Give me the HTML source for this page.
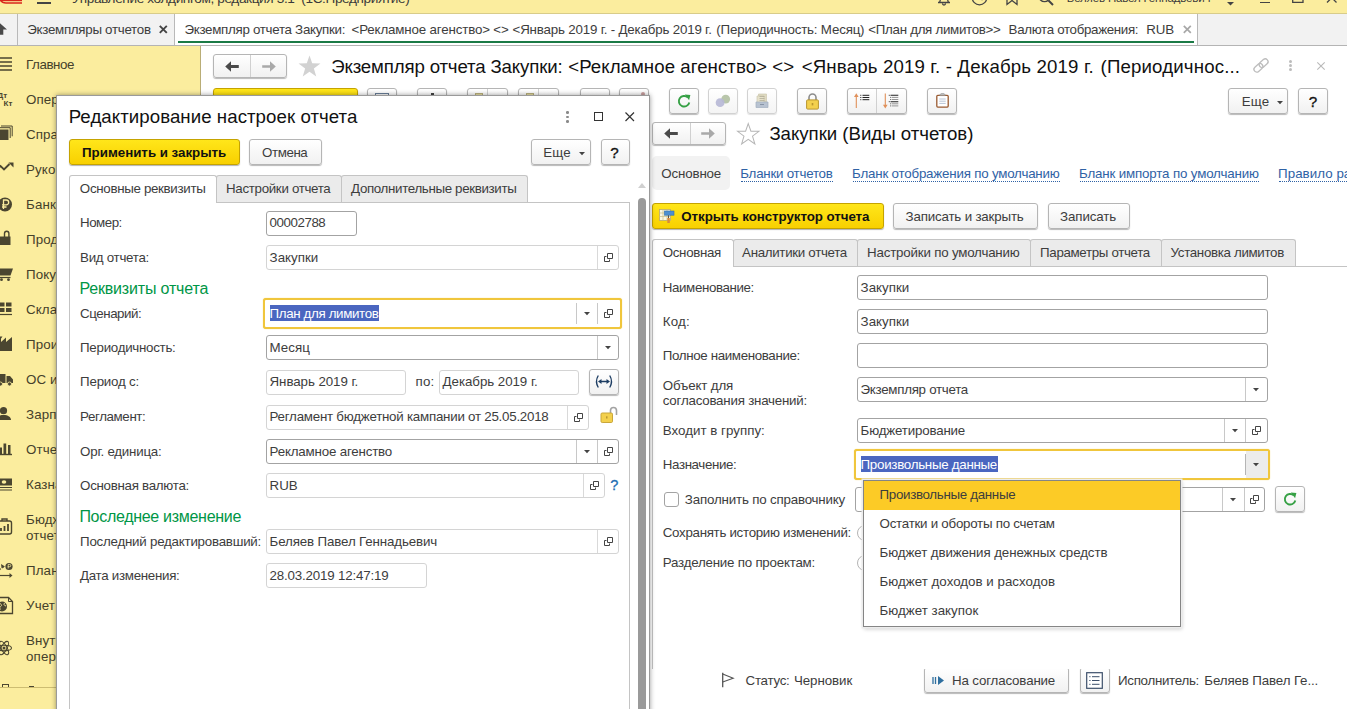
<!DOCTYPE html>
<html lang="ru"><head><meta charset="utf-8"><title>1С:Предприятие</title>
<style>
*{box-sizing:border-box;margin:0;padding:0}
html,body{width:1347px;height:709px;overflow:hidden;background:#fff}
body{font-family:"Liberation Sans",sans-serif;font-size:13.33px;color:#3d3d3d;position:relative}
.a{position:absolute}
.t{position:absolute;white-space:pre}
svg{position:absolute;overflow:visible}
.btn{border:1px solid #b5b5b5;border-radius:3px;background:linear-gradient(#ffffff,#f1f1f1);box-shadow:0 1px 1px rgba(0,0,0,.28)}
.btnd{border:1px solid #d2d2d2;border-radius:3px;background:linear-gradient(#ffffff,#f4f4f4);box-shadow:0 1px 1px rgba(0,0,0,.12)}
.ybtn{border:1px solid #c5a300;border-radius:3px;background:linear-gradient(#ffe61a,#f8d000);box-shadow:0 1px 1px rgba(0,0,0,.3)}
.inp{border:1px solid #a3a3a3;border-radius:3px;background:#fff}
.ro{border-color:#d4d4d4}
.foc{border:2px solid #f0c63c;border-radius:3px;background:#fff;box-shadow:0 0 1px #f0c63c}
.sep{width:1px;background:#c8c8c8}
.tab{border:1px solid #c4c4c4;border-bottom:none;border-radius:3px 3px 0 0;background:#ebebeb}
.tabon{background:#fff}

</style></head><body>
<div class="a " style="left:0px;top:0px;width:1347px;height:14px;background:#fbed9e;border-bottom:1px solid #d8cc8a;overflow:hidden"></div>
<div class="a" style="left:0;top:0;width:1347px;height:13px;overflow:hidden">
<svg style="left:0px;top:0px;" width="24" height="6" viewBox="0 0 24 6"><path d="M0 0.400h22" stroke="#d9261c" stroke-width="1.6" fill="none"/><path d="M0 -1c1 3 3 4 6 4h16" stroke="#d9261c" stroke-width="1.5" fill="none"/></svg>
<div class="a " style="left:37px;top:2.3px;width:14px;height:1.3px;background:#444"></div>
<span class="t" style="left:72.05px;top:-9.24px;line-height:16px;font-size:13.6px;color:#3a3a3a;letter-spacing:-0.369px;">Управление холдингом, редакция 3.1  (1С:Предприятие)</span>
<span class="t" style="left:1066.79px;top:-9.47px;line-height:14px;font-size:11.5px;color:#3a3a3a;letter-spacing:-0.156px;">Беляев Павел Геннадьевич</span>
<svg style="left:936px;top:-10px;" width="16" height="16" viewBox="0 0 16 16"><path d="M2 12.5h12M3.5 12c1-1 1-3 1-5a3.5 3.5 0 0 1 7 0c0 2 0 4 1 5M6.5 13.5a1.5 1.5 0 0 0 3 0" stroke="#444" stroke-width="1.3" fill="none"/></svg>
<svg style="left:971px;top:-10px;" width="17" height="17" viewBox="0 0 17 17"><circle cx="8.5" cy="7.5" r="7.3" stroke="#444" stroke-width="1.3" fill="none"/><path d="M8.5 3v5l3 2" stroke="#444" stroke-width="1.3" fill="none"/></svg>
<svg style="left:1005px;top:-10px;" width="14" height="16" viewBox="0 0 14 16"><path d="M2 0v14.5l5-4 5 4V0" stroke="#444" stroke-width="1.3" fill="none"/></svg>
<svg style="left:1038px;top:-10px;" width="16" height="16" viewBox="0 0 16 16"><circle cx="6.5" cy="6" r="5.6" stroke="#444" stroke-width="1.4" fill="none"/><path d="M10.5 10.5l4.5 4.5" stroke="#444" stroke-width="2"/></svg>
<svg style="left:1227px;top:2.3px;" width="7" height="4" viewBox="0 0 7 4"><path d="M0 0h7l-3.5 3.5z" fill="#444"/></svg>
<div class="a " style="left:1260px;top:1.5px;width:10px;height:1.4px;background:#444"></div>
<svg style="left:1292px;top:-8px;" width="12" height="12" viewBox="0 0 12 12"><path d="M0.7 0v10.3h10.3v-10.3" stroke="#444" stroke-width="1.3" fill="none"/></svg>
<svg style="left:1327px;top:-7px;" width="10" height="10" viewBox="0 0 10 10"><path d="M0 0l9.5 9.5M9.5 0l-9.500 9.500" stroke="#444" stroke-width="1.3"/></svg>
</div>
<div class="a " style="left:0px;top:14px;width:1347px;height:32px;background:#f2f2f2;border-bottom:1px solid #b4b4b4"></div>
<div class="a " style="left:17px;top:14px;width:1px;height:31px;background:#b9b9b9"></div>
<div class="a " style="left:174px;top:14px;width:1px;height:31px;background:#b9b9b9"></div>
<div class="a " style="left:175px;top:14px;width:1022px;height:31px;background:#fff"></div>
<div class="a " style="left:1197px;top:14px;width:1px;height:31px;background:#b9b9b9"></div>
<div class="a " style="left:178px;top:41px;width:1016px;height:2px;background:#1b7a46"></div>
<svg style="left:-9px;top:22px;" width="17" height="13" viewBox="0 0 17 13"><path d="M8 0.300l8 7.200h-3.700v5.200h-8.600v-5.200h-3.700z" fill="#4a4a4a"/></svg>
<span class="t" style="left:27.27px;top:21.75px;line-height:16px;letter-spacing:-0.288px;">Экземпляры отчетов</span>
<svg style="left:158.5px;top:25px;" width="9" height="9" viewBox="0 0 9 9"><path d="M0.8 0.8l7 7M7.800 0.800l-7 7" stroke="#444" stroke-width="1.9"/></svg>
<span class="t" style="left:184.47px;top:21.75px;line-height:16px;letter-spacing:-0.293px;">Экземпляр отчета Закупки:</span>
<span class="t" style="left:351.57px;top:21.75px;line-height:16px;letter-spacing:-0.156px;">&lt;Рекламное агенство&gt; &lt;&gt;</span>
<span class="t" style="left:512.57px;top:21.75px;line-height:16px;letter-spacing:-0.186px;">&lt;Январь 2019 г. - Декабрь 2019 г.</span>
<span class="t" style="left:716.37px;top:21.75px;line-height:16px;letter-spacing:-0.185px;">(Периодичность: Месяц)</span>
<span class="t" style="left:868.37px;top:21.75px;line-height:16px;letter-spacing:-0.302px;">&lt;План для лимитов&gt;&gt;</span>
<span class="t" style="left:1008.57px;top:21.75px;line-height:16px;letter-spacing:-0.325px;">Валюта отображения:</span>
<span class="t" style="left:1146.37px;top:21.75px;line-height:16px;letter-spacing:-0.220px;">RUB</span>
<svg style="left:1182.5px;top:25px;" width="9" height="9" viewBox="0 0 9 9"><path d="M0.8 0.8l7 7M7.800 0.800l-7 7" stroke="#a8a8a8" stroke-width="1.7"/></svg>
<div class="a " style="left:0px;top:46px;width:200px;height:663px;background:#fbed9e"></div>
<div class="a " style="left:200px;top:46px;width:1px;height:663px;background:#b9ad76"></div>
<span class="t" style="left:26.07px;top:56.85px;line-height:16px;color:#45412b;letter-spacing:-0.420px;">Главное</span>
<span class="t" style="left:26.07px;top:91.85px;line-height:16px;color:#45412b;letter-spacing:0.100px;">Операции</span>
<span class="t" style="left:26.07px;top:126.85px;line-height:16px;color:#45412b;letter-spacing:0.100px;">Справочники</span>
<span class="t" style="left:26.07px;top:161.85px;line-height:16px;color:#45412b;letter-spacing:0.100px;">Руководителю</span>
<span class="t" style="left:26.07px;top:196.85px;line-height:16px;color:#45412b;letter-spacing:0.100px;">Банк и касса</span>
<span class="t" style="left:26.07px;top:231.85px;line-height:16px;color:#45412b;letter-spacing:0.100px;">Продажи</span>
<span class="t" style="left:26.07px;top:266.85px;line-height:16px;color:#45412b;letter-spacing:0.100px;">Покупки</span>
<span class="t" style="left:26.07px;top:301.85px;line-height:16px;color:#45412b;letter-spacing:0.100px;">Склад</span>
<span class="t" style="left:26.07px;top:336.85px;line-height:16px;color:#45412b;letter-spacing:0.100px;">Производство</span>
<span class="t" style="left:26.07px;top:371.85px;line-height:16px;color:#45412b;letter-spacing:0.100px;">ОС и НМА</span>
<span class="t" style="left:26.07px;top:406.85px;line-height:16px;color:#45412b;letter-spacing:0.100px;">Зарплата и кадры</span>
<span class="t" style="left:26.07px;top:441.85px;line-height:16px;color:#45412b;letter-spacing:0.100px;">Отчеты</span>
<span class="t" style="left:26.07px;top:476.85px;line-height:16px;color:#45412b;letter-spacing:0.100px;">Казначейство</span>
<span class="t" style="left:26.07px;top:511.65px;line-height:16px;color:#45412b;letter-spacing:0.100px;">Бюджетирование,</span>
<span class="t" style="left:26.07px;top:527.65px;line-height:16px;color:#45412b;letter-spacing:0.100px;">отчетность</span>
<span class="t" style="left:26.07px;top:562.85px;line-height:16px;color:#45412b;letter-spacing:0.100px;">Планирование</span>
<span class="t" style="left:26.07px;top:597.85px;line-height:16px;color:#45412b;letter-spacing:0.100px;">Учет</span>
<span class="t" style="left:26.07px;top:632.65px;line-height:16px;color:#45412b;letter-spacing:0.100px;">Внутригрупповые</span>
<span class="t" style="left:26.07px;top:648.65px;line-height:16px;color:#45412b;letter-spacing:0.100px;">операции</span>
<div class="a " style="left:2px;top:684px;width:6.5px;height:4px;border:1.300px solid #4b4630;border-bottom:none"></div>
<div class="a " style="left:29px;top:686px;width:5px;height:1.3px;background:#4b4630"></div>
<div class="a " style="left:0px;top:687px;width:57px;height:1px;background:#cdbd72"></div>
<div class="a " style="left:0px;top:688px;width:57px;height:21px;background:#fbed9e"></div>
<div class="a btn" style="left:213px;top:54px;width:74px;height:24px;"></div>
<div class="a " style="left:250px;top:55px;width:1px;height:22px;background:#d0d0d0"></div>
<svg style="left:224.5px;top:61.0px;" width="14" height="11" viewBox="0 0 14 11"><path d="M0.200 5.500l5.800 -5.300v3.800h7.800v3h-7.800v3.800z" fill="#4a4a4a"/></svg>
<svg style="left:261.5px;top:61.0px;" width="14" height="11" viewBox="0 0 14 11"><path d="M13.800 5.500l-5.800 -5.300v4h-7.800v2.600h7.800v4z" fill="#a9a9a9"/></svg>
<svg style="left:298px;top:54.5px;" width="23" height="23" viewBox="0 0 1 1"><polygon points="0.500,0.025 0.618,0.363 0.976,0.370 0.690,0.587 0.794,0.930 0.500,0.725 0.206,0.930 0.310,0.587 0.024,0.370 0.382,0.363" fill="#d2d2d2"/></svg>
<span class="t" style="left:331.19px;top:55.71px;line-height:22px;font-size:18.67px;color:#111;letter-spacing:-0.150px;">Экземпляр отчета Закупки:</span>
<span class="t" style="left:568.19px;top:55.71px;line-height:22px;font-size:18.67px;color:#111;letter-spacing:0.046px;">&lt;Рекламное агенство&gt; &lt;&gt;</span>
<span class="t" style="left:801.67px;top:55.71px;line-height:22px;font-size:18.67px;color:#111;letter-spacing:0.150px;">&lt;Январь 2019 г. - Декабрь 2019 г.</span>
<span class="t" style="left:1100.56px;top:55.71px;line-height:22px;font-size:18.67px;color:#111;letter-spacing:0.150px;">(Периодичнос...</span>
<svg style="left:1252px;top:57px;" width="18" height="17" viewBox="0 0 18 17"><g transform="rotate(-42 9 8.500)" stroke="#bdbdbd" stroke-width="1.300" fill="none"><rect x="0.500" y="5.700" width="10" height="5.600" rx="2.800"/><rect x="7.500" y="5.700" width="10" height="5.600" rx="2.800" /></g></svg>
<div class="a " style="left:1289px;top:59.8px;width:3px;height:3px;background:#bcbcbc;border-radius:50%"></div>
<div class="a " style="left:1289px;top:63.9px;width:3px;height:3px;background:#bcbcbc;border-radius:50%"></div>
<div class="a " style="left:1289px;top:68.0px;width:3px;height:3px;background:#bcbcbc;border-radius:50%"></div>
<svg style="left:1316.5px;top:61.5px;" width="8" height="8" viewBox="0 0 8 8"><path d="M0.300 0.300l7.400 7.400M7.700 0.300l-7.400 7.400" stroke="#b9b9b9" stroke-width="1.100"/></svg>
<div class="a ybtn" style="left:213px;top:88px;width:145px;height:26px;"></div>
<div class="a btn" style="left:367px;top:88px;width:30px;height:26px;"></div>
<div class="a btn" style="left:417px;top:88px;width:30px;height:26px;"></div>
<div class="a btn" style="left:467px;top:88px;width:41px;height:26px;"></div>
<div class="a btn" style="left:518px;top:88px;width:41px;height:26px;"></div>
<div class="a btn" style="left:580px;top:88px;width:30px;height:26px;"></div>
<div class="a btn" style="left:619px;top:88px;width:30px;height:26px;"></div>
<div class="a " style="left:487px;top:89px;width:1px;height:24px;background:#d0d0d0"></div>
<div class="a " style="left:538px;top:89px;width:1px;height:24px;background:#d0d0d0"></div>
<div class="a " style="left:375px;top:93px;width:14px;height:10px;border:1.5px solid #6a7f99"></div>
<div class="a " style="left:431px;top:93px;width:3px;height:4px;background:#444"></div>
<div class="a " style="left:475px;top:93px;width:8px;height:6px;background:#e8e0a0;border:1px solid #b9b080"></div>
<div class="a " style="left:526px;top:93px;width:8px;height:6px;background:#e8e0a0;border:1px solid #b9b080"></div>
<div class="a " style="left:641px;top:92px;width:4px;height:4px;background:#c9a0a0;border-radius:50%"></div>
<div class="a btn" style="left:669px;top:88px;width:30px;height:26px;"></div>
<div class="a btnd" style="left:708px;top:88px;width:30px;height:26px;"></div>
<div class="a btnd" style="left:747px;top:88px;width:30px;height:26px;"></div>
<div class="a btn" style="left:797px;top:88px;width:30px;height:26px;"></div>
<div class="a btn" style="left:847px;top:88px;width:60px;height:26px;"></div>
<div class="a btn" style="left:927px;top:88px;width:30px;height:26px;"></div>
<div class="a " style="left:876px;top:89px;width:1px;height:24px;background:#d0d0d0"></div>
<div class="a btn" style="left:1228px;top:88px;width:60px;height:26px;"></div>
<div class="a btn" style="left:1298px;top:88px;width:30px;height:26px;"></div>
<span class="t" style="left:1241.71px;top:93.85px;line-height:16px;letter-spacing:0.150px;">Еще</span>
<svg style="left:1276.5px;top:100.5px;" width="6" height="4" viewBox="0 0 6 4"><path d="M0 0h6l-3 3.300z" fill="#444"/></svg>
<span class="t" style="left:1308.64px;top:92.87px;line-height:18px;font-size:15.2px;color:#111;letter-spacing:0.000px;-webkit-text-stroke:0.35px #111;">?</span>
<div class="a btn" style="left:652px;top:121.5px;width:74px;height:23.5px;"></div>
<div class="a " style="left:689.5px;top:122.5px;width:1px;height:21.5px;background:#d0d0d0"></div>
<svg style="left:663.75px;top:128.25px;" width="14" height="11" viewBox="0 0 14 11"><path d="M0.200 5.500l5.800 -5.300v3.800h7.800v3h-7.800v3.800z" fill="#4a4a4a"/></svg>
<svg style="left:700.75px;top:128.25px;" width="14" height="11" viewBox="0 0 14 11"><path d="M13.800 5.500l-5.800 -5.300v4h-7.800v2.600h7.800v4z" fill="#a9a9a9"/></svg>
<svg style="left:737px;top:122.5px;" width="22.5" height="22.5" viewBox="0 0 1 1"><polygon points="0.500,0.025 0.618,0.363 0.976,0.370 0.690,0.587 0.794,0.930 0.500,0.725 0.206,0.930 0.310,0.587 0.024,0.370 0.382,0.363" fill="#fff" stroke="#b5b5b5" stroke-width="0.045"/></svg>
<span class="t" style="left:769.39px;top:122.81px;line-height:22px;font-size:18.67px;color:#111;letter-spacing:-0.029px;">Закупки (Виды отчетов)</span>
<div class="a " style="left:652px;top:156px;width:78px;height:34px;background:#f2f2f2;border-radius:5px"></div>
<span class="t" style="left:661.37px;top:165.65px;line-height:16px;letter-spacing:-0.167px;">Основное</span>
<span class="t" style="left:740.27px;top:165.75px;line-height:16px;color:#2f62a5;letter-spacing:-0.239px;">Бланки отчетов</span>
<div class="a " style="left:741.2px;top:180.5px;width:91.39999999999998px;height:1px;border-bottom:1px dotted #2f62a5"></div>
<span class="t" style="left:852.07px;top:165.75px;line-height:16px;color:#2f62a5;letter-spacing:-0.198px;">Бланк отображения по умолчанию</span>
<div class="a " style="left:853px;top:180.5px;width:206.5px;height:1px;border-bottom:1px dotted #2f62a5"></div>
<span class="t" style="left:1078.97px;top:165.75px;line-height:16px;color:#2f62a5;letter-spacing:-0.155px;">Бланк импорта по умолчанию</span>
<div class="a " style="left:1079.9px;top:180.5px;width:178.79999999999995px;height:1px;border-bottom:1px dotted #2f62a5"></div>
<span class="t" style="left:1278.07px;top:165.75px;line-height:16px;color:#2f62a5;letter-spacing:0.043px;">Правило расчета</span>
<div class="a " style="left:1279px;top:180.5px;width:106px;height:1px;border-bottom:1px dotted #2f62a5"></div>
<div class="a ybtn" style="left:652px;top:203px;width:232px;height:26px;"></div>
<span class="t" style="left:681.27px;top:209.05px;line-height:16px;font-weight:bold;color:#111;letter-spacing:-0.063px;">Открыть конструктор отчета</span>
<div class="a btn" style="left:893px;top:203px;width:145px;height:26px;"></div>
<span class="t" style="left:905.57px;top:209.05px;line-height:16px;letter-spacing:-0.177px;">Записать и закрыть</span>
<div class="a btn" style="left:1048px;top:203px;width:82px;height:26px;"></div>
<span class="t" style="left:1060.07px;top:209.05px;line-height:16px;letter-spacing:-0.108px;">Записать</span>
<div class="a " style="left:652px;top:266px;width:695px;height:1px;background:#c4c4c4"></div>
<div class="a " style="left:652px;top:266px;width:1px;height:403px;background:#c4c4c4"></div>
<div class="a tab tabon" style="left:652px;top:239px;width:81.5px;height:28px;"></div>
<div class="a tab" style="left:732.5px;top:239px;width:125.5px;height:27px;"></div>
<div class="a tab" style="left:857px;top:239px;width:174px;height:27px;"></div>
<div class="a tab" style="left:1030px;top:239px;width:131.5px;height:27px;"></div>
<div class="a tab" style="left:1160.5px;top:239px;width:135.5px;height:27px;"></div>
<span class="t" style="left:662.77px;top:244.95px;line-height:16px;letter-spacing:-0.339px;">Основная</span>
<span class="t" style="left:742.07px;top:244.95px;line-height:16px;letter-spacing:-0.315px;">Аналитики отчета</span>
<span class="t" style="left:867.07px;top:244.95px;line-height:16px;letter-spacing:-0.197px;">Настройки по умолчанию</span>
<span class="t" style="left:1040.07px;top:244.95px;line-height:16px;letter-spacing:-0.337px;">Параметры отчета</span>
<span class="t" style="left:1170.57px;top:244.95px;line-height:16px;letter-spacing:-0.330px;">Установка лимитов</span>
<span class="t" style="left:662.77px;top:280.15px;line-height:16px;letter-spacing:-0.383px;">Наименование:</span>
<div class="a inp" style="left:857px;top:275px;width:411px;height:25px;"></div>
<span class="t" style="left:860.57px;top:279.75px;line-height:16px;letter-spacing:0.016px;">Закупки</span>
<span class="t" style="left:662.86px;top:314.15px;line-height:16px;letter-spacing:0.150px;">Код:</span>
<div class="a inp" style="left:857px;top:309px;width:411px;height:25px;"></div>
<span class="t" style="left:860.57px;top:313.75px;line-height:16px;letter-spacing:0.016px;">Закупки</span>
<span class="t" style="left:662.77px;top:348.15px;line-height:16px;letter-spacing:-0.352px;">Полное наименование:</span>
<div class="a inp" style="left:857px;top:343px;width:411px;height:25px;"></div>
<span class="t" style="left:662.77px;top:377.65px;line-height:16px;letter-spacing:-0.151px;">Объект для</span>
<span class="t" style="left:662.77px;top:393.35px;line-height:16px;letter-spacing:-0.223px;">согласования значений:</span>
<div class="a inp" style="left:857px;top:377px;width:411px;height:25px;"></div>
<span class="t" style="left:860.57px;top:381.75px;line-height:16px;letter-spacing:-0.282px;">Экземпляр отчета</span>
<div class="a sep" style="left:1245px;top:378px;width:1px;height:23px;"></div>
<svg style="left:1252.5px;top:388.0px;" width="6" height="4" viewBox="0 0 6 4"><path d="M0 0h6l-3 3.300z" fill="#444"/></svg>
<span class="t" style="left:662.77px;top:422.85px;line-height:16px;letter-spacing:0.015px;">Входит в группу:</span>
<div class="a inp" style="left:857px;top:418px;width:411px;height:25px;"></div>
<span class="t" style="left:860.57px;top:422.85px;line-height:16px;letter-spacing:-0.181px;">Бюджетирование</span>
<div class="a sep" style="left:1224px;top:419px;width:1px;height:23px;"></div>
<div class="a sep" style="left:1245px;top:419px;width:1px;height:23px;"></div>
<svg style="left:1231.5px;top:429.0px;" width="6" height="4" viewBox="0 0 6 4"><path d="M0 0h6l-3 3.300z" fill="#444"/></svg>
<svg style="left:1252px;top:426px;" width="9" height="9" viewBox="0 0 9 9"><path d="M3.500 0.500h5v5h-5z" fill="#fff" stroke="#444" stroke-width="1"/><path d="M2.500 3.500h-2v5h5v-2" fill="none" stroke="#444" stroke-width="1"/></svg>
<span class="t" style="left:662.77px;top:456.65px;line-height:16px;letter-spacing:-0.376px;">Назначение:</span>
<div class="a foc" style="left:854px;top:449px;width:416px;height:31px;"></div>
<div class="a " style="left:861.3px;top:456px;width:136.5px;height:16px;background:#4a66c0"></div>
<span class="t" style="left:860.57px;top:456.65px;line-height:16px;color:#fff;letter-spacing:-0.277px;">Произвольные данные</span>
<div class="a " style="left:1246px;top:451px;width:21.5px;height:27px;background:#ececec"></div>
<div class="a sep" style="left:1245px;top:454px;width:1px;height:21px;background:#b5b5b5"></div>
<svg style="left:1252.5px;top:463.0px;" width="6" height="4" viewBox="0 0 6 4"><path d="M0 0h6l-3 3.300z" fill="#444"/></svg>
<div class="a " style="left:664px;top:492px;width:15px;height:15px;border:1px solid #a3a3a3;border-radius:3px;background:#fff"></div>
<span class="t" style="left:684.87px;top:491.65px;line-height:16px;letter-spacing:-0.183px;">Заполнить по справочнику</span>
<div class="a inp" style="left:855px;top:487px;width:410px;height:25px;"></div>
<div class="a sep" style="left:1222px;top:488px;width:1px;height:23px;"></div>
<div class="a sep" style="left:1243.5px;top:488px;width:1px;height:23px;"></div>
<svg style="left:1229.5px;top:497.7px;" width="6" height="4" viewBox="0 0 6 4"><path d="M0 0h6l-3 3.300z" fill="#444"/></svg>
<svg style="left:1250px;top:495px;" width="9" height="9" viewBox="0 0 9 9"><path d="M3.500 0.500h5v5h-5z" fill="#fff" stroke="#444" stroke-width="1"/><path d="M2.500 3.500h-2v5h5v-2" fill="none" stroke="#444" stroke-width="1"/></svg>
<div class="a btn" style="left:1275px;top:486px;width:30px;height:26px;"></div>
<span class="t" style="left:662.77px;top:525.15px;line-height:16px;letter-spacing:-0.300px;">Сохранять историю изменений:</span>
<span class="t" style="left:662.77px;top:555.35px;line-height:16px;letter-spacing:-0.222px;">Разделение по проектам:</span>
<div class="a " style="left:857px;top:525px;width:16px;height:16px;border:1px solid #b5b5b5;border-radius:50%"></div>
<div class="a " style="left:857px;top:555px;width:16px;height:16px;border:1px solid #b5b5b5;border-radius:50%"></div>
<div class="a " style="left:863px;top:480px;width:318px;height:147px;background:#fff;border:1px solid #858585;box-shadow:0 0 0 1.500px #ececec,1px 2px 4px rgba(0,0,0,.22)"></div>
<div class="a " style="left:864px;top:481px;width:316px;height:29px;background:#fccb26"></div>
<span class="t" style="left:879.57px;top:487.45px;line-height:16px;letter-spacing:-0.316px;">Произвольные данные</span>
<span class="t" style="left:879.57px;top:516.45px;line-height:16px;letter-spacing:-0.254px;">Остатки и обороты по счетам</span>
<span class="t" style="left:879.57px;top:545.45px;line-height:16px;letter-spacing:-0.104px;">Бюджет движения денежных средств</span>
<span class="t" style="left:879.57px;top:574.45px;line-height:16px;letter-spacing:0.012px;">Бюджет доходов и расходов</span>
<span class="t" style="left:879.57px;top:603.45px;line-height:16px;letter-spacing:0.012px;">Бюджет закупок</span>
<span class="t" style="left:745.57px;top:672.65px;line-height:16px;letter-spacing:-0.273px;">Статус:</span>
<span class="t" style="left:793.97px;top:672.65px;line-height:16px;letter-spacing:-0.077px;">Черновик</span>
<div class="a" style="left:900px;top:669px;width:447px;height:40px;overflow:hidden">
<div class="a btn" style="left:23.5px;top:-2.5px;width:145px;height:26px;"></div>
<div class="a btn" style="left:179.5px;top:-2.5px;width:30px;height:26px;"></div>
</div>
<span class="t" style="left:952.07px;top:672.65px;line-height:16px;letter-spacing:-0.165px;">На согласование</span>
<span class="t" style="left:1118.07px;top:672.65px;line-height:16px;letter-spacing:-0.301px;">Исполнитель:</span>
<span class="t" style="left:1204.27px;top:672.65px;line-height:16px;letter-spacing:-0.125px;">Беляев Павел Ге...</span>
<div class="a " style="left:56px;top:95px;width:594px;height:620px;background:#fff;border:1px solid #9a9a9a;box-shadow:0 0 5px rgba(0,0,0,.4)"></div>
<span class="t" style="left:68.69px;top:105.91px;line-height:22px;font-size:18.67px;color:#111;letter-spacing:0.057px;">Редактирование настроек отчета</span>
<div class="a " style="left:566px;top:111.0px;width:2.6px;height:2.6px;background:#8a8a8a;border-radius:50%"></div>
<div class="a " style="left:566px;top:115.6px;width:2.6px;height:2.6px;background:#8a8a8a;border-radius:50%"></div>
<div class="a " style="left:566px;top:120.2px;width:2.6px;height:2.6px;background:#8a8a8a;border-radius:50%"></div>
<div class="a " style="left:594px;top:112px;width:9px;height:9px;border:1.3px solid #333"></div>
<svg style="left:625px;top:112px;" width="10" height="10" viewBox="0 0 10 10"><path d="M0.500 0.500l8.500 8.500M9 0.500l-8.500 8.500" stroke="#333" stroke-width="1.2"/></svg>
<div class="a ybtn" style="left:69px;top:139px;width:171px;height:26px;"></div>
<span class="t" style="left:82.07px;top:145.05px;line-height:16px;font-weight:bold;color:#111;letter-spacing:-0.018px;">Применить и закрыть</span>
<div class="a btn" style="left:249px;top:139px;width:73px;height:26px;"></div>
<span class="t" style="left:262.07px;top:145.05px;line-height:16px;letter-spacing:-0.424px;">Отмена</span>
<div class="a btn" style="left:530.5px;top:139px;width:60px;height:26px;"></div>
<span class="t" style="left:543.21px;top:145.05px;line-height:16px;letter-spacing:0.150px;">Еще</span>
<svg style="left:578.5px;top:151.5px;" width="6" height="4" viewBox="0 0 6 4"><path d="M0 0h6l-3 3.300z" fill="#444"/></svg>
<div class="a btn" style="left:600.5px;top:139px;width:29px;height:26px;"></div>
<span class="t" style="left:610.34px;top:144.07px;line-height:18px;font-size:15.2px;color:#111;letter-spacing:0.000px;-webkit-text-stroke:0.35px #111;">?</span>
<div class="a " style="left:69px;top:202px;width:561px;height:520px;border:1px solid #c4c4c4;background:#fff"></div>
<div class="a tab tabon" style="left:69px;top:175px;width:148px;height:28px;"></div>
<div class="a tab" style="left:216px;top:175px;width:125.5px;height:27px;"></div>
<div class="a tab" style="left:341px;top:175px;width:187px;height:27px;"></div>
<span class="t" style="left:79.87px;top:180.65px;line-height:16px;letter-spacing:-0.321px;">Основные реквизиты</span>
<span class="t" style="left:226.07px;top:180.65px;line-height:16px;letter-spacing:-0.324px;">Настройки отчета</span>
<span class="t" style="left:351.07px;top:180.65px;line-height:16px;letter-spacing:-0.345px;">Дополнительные реквизиты</span>
<svg style="left:637.5px;top:183px;" width="8" height="5" viewBox="0 0 8 5"><path d="M0 5l4 -5l4 5z" fill="#d0d0d0"/></svg>
<div class="a " style="left:638px;top:198px;width:7.5px;height:520px;background:#9a9a9a;border-radius:4px"></div>
<span class="t" style="left:80.07px;top:215.45px;line-height:16px;letter-spacing:-0.506px;">Номер:</span>
<div class="a inp" style="left:266px;top:211px;width:91px;height:25px;"></div>
<span class="t" style="left:269.57px;top:215.45px;line-height:16px;letter-spacing:-0.443px;">00002788</span>
<span class="t" style="left:80.07px;top:249.65px;line-height:16px;letter-spacing:-0.282px;">Вид отчета:</span>
<div class="a inp ro" style="left:266px;top:245px;width:353px;height:25px;"></div>
<span class="t" style="left:269.57px;top:249.65px;line-height:16px;letter-spacing:0.016px;">Закупки</span>
<div class="a sep" style="left:597px;top:246px;width:1px;height:23px;background:#d9d9d9"></div>
<svg style="left:604px;top:253px;" width="9" height="9" viewBox="0 0 9 9"><path d="M3.500 0.500h5v5h-5z" fill="#fff" stroke="#444" stroke-width="1"/><path d="M2.500 3.500h-2v5h5v-2" fill="none" stroke="#444" stroke-width="1"/></svg>
<span class="t" style="left:79.38px;top:279.08px;line-height:19px;font-size:16px;color:#009646;letter-spacing:-0.169px;">Реквизиты отчета</span>
<span class="t" style="left:80.07px;top:305.65px;line-height:16px;letter-spacing:-0.450px;">Сценарий:</span>
<div class="a foc" style="left:263px;top:298px;width:359px;height:31px;"></div>
<div class="a " style="left:270.3px;top:305.3px;width:108.5px;height:15.5px;background:#4a66c0"></div>
<span class="t" style="left:269.57px;top:305.65px;line-height:16px;color:#fff;letter-spacing:-0.359px;">План для лимитов</span>
<div class="a sep" style="left:576px;top:303px;width:1px;height:21px;"></div>
<div class="a sep" style="left:597px;top:303px;width:1px;height:21px;"></div>
<svg style="left:583.5px;top:312.0px;" width="6" height="4" viewBox="0 0 6 4"><path d="M0 0h6l-3 3.300z" fill="#444"/></svg>
<svg style="left:604px;top:309px;" width="9" height="9" viewBox="0 0 9 9"><path d="M3.500 0.500h5v5h-5z" fill="#fff" stroke="#444" stroke-width="1"/><path d="M2.500 3.500h-2v5h5v-2" fill="none" stroke="#444" stroke-width="1"/></svg>
<span class="t" style="left:80.07px;top:339.65px;line-height:16px;letter-spacing:-0.279px;">Периодичность:</span>
<div class="a inp" style="left:266px;top:335px;width:353px;height:25px;"></div>
<span class="t" style="left:269.57px;top:339.65px;line-height:16px;letter-spacing:0.005px;">Месяц</span>
<div class="a sep" style="left:597px;top:336px;width:1px;height:23px;"></div>
<svg style="left:605px;top:346.0px;" width="6" height="4" viewBox="0 0 6 4"><path d="M0 0h6l-3 3.300z" fill="#444"/></svg>
<span class="t" style="left:80.07px;top:374.45px;line-height:16px;letter-spacing:-0.202px;">Период с:</span>
<div class="a inp ro" style="left:266px;top:370px;width:140px;height:25px;"></div>
<span class="t" style="left:269.57px;top:374.45px;line-height:16px;letter-spacing:-0.075px;">Январь 2019 г.</span>
<span class="t" style="left:415.55px;top:374.45px;line-height:16px;letter-spacing:0.150px;">по:</span>
<div class="a inp ro" style="left:439px;top:370px;width:140px;height:25px;"></div>
<span class="t" style="left:442.57px;top:374.45px;line-height:16px;letter-spacing:-0.054px;">Декабрь 2019 г.</span>
<div class="a btn" style="left:589px;top:369px;width:30px;height:26px;"></div>
<span class="t" style="left:80.07px;top:409.45px;line-height:16px;letter-spacing:-0.391px;">Регламент:</span>
<div class="a inp ro" style="left:266px;top:405px;width:322.5px;height:25px;"></div>
<span class="t" style="left:269.57px;top:409.45px;line-height:16px;letter-spacing:-0.243px;">Регламент бюджетной кампании от 25.05.2018</span>
<div class="a sep" style="left:567px;top:406px;width:1px;height:23px;background:#d9d9d9"></div>
<svg style="left:574px;top:413px;" width="9" height="9" viewBox="0 0 9 9"><path d="M3.500 0.500h5v5h-5z" fill="#fff" stroke="#444" stroke-width="1"/><path d="M2.500 3.500h-2v5h5v-2" fill="none" stroke="#444" stroke-width="1"/></svg>
<span class="t" style="left:80.07px;top:443.75px;line-height:16px;letter-spacing:-0.218px;">Орг. единица:</span>
<div class="a inp" style="left:266px;top:439px;width:353px;height:25px;"></div>
<span class="t" style="left:269.57px;top:443.75px;line-height:16px;letter-spacing:-0.183px;">Рекламное агенство</span>
<div class="a sep" style="left:576px;top:440px;width:1px;height:23px;"></div>
<div class="a sep" style="left:597px;top:440px;width:1px;height:23px;"></div>
<svg style="left:583.5px;top:449.7px;" width="6" height="4" viewBox="0 0 6 4"><path d="M0 0h6l-3 3.300z" fill="#444"/></svg>
<svg style="left:604px;top:447px;" width="9" height="9" viewBox="0 0 9 9"><path d="M3.500 0.500h5v5h-5z" fill="#fff" stroke="#444" stroke-width="1"/><path d="M2.500 3.500h-2v5h5v-2" fill="none" stroke="#444" stroke-width="1"/></svg>
<span class="t" style="left:80.07px;top:477.75px;line-height:16px;letter-spacing:-0.285px;">Основная валюта:</span>
<div class="a inp ro" style="left:266px;top:473px;width:339px;height:25px;"></div>
<span class="t" style="left:269.57px;top:477.75px;line-height:16px;letter-spacing:0.030px;">RUB</span>
<div class="a sep" style="left:583px;top:474px;width:1px;height:23px;background:#d9d9d9"></div>
<svg style="left:590px;top:481px;" width="9" height="9" viewBox="0 0 9 9"><path d="M3.500 0.500h5v5h-5z" fill="#fff" stroke="#444" stroke-width="1"/><path d="M2.500 3.500h-2v5h5v-2" fill="none" stroke="#444" stroke-width="1"/></svg>
<span class="t" style="left:610.28px;top:476.97px;line-height:17px;font-size:14.5px;color:#1f6fb4;letter-spacing:0.000px;-webkit-text-stroke:0.300px #1f6fb4;">?</span>
<span class="t" style="left:79.38px;top:507.38px;line-height:19px;font-size:16px;color:#009646;letter-spacing:-0.296px;">Последнее изменение</span>
<span class="t" style="left:80.07px;top:533.85px;line-height:16px;letter-spacing:-0.235px;">Последний редактировавший:</span>
<div class="a inp ro" style="left:266px;top:529px;width:353px;height:25px;"></div>
<span class="t" style="left:269.57px;top:533.85px;line-height:16px;letter-spacing:-0.133px;">Беляев Павел Геннадьевич</span>
<div class="a sep" style="left:597px;top:530px;width:1px;height:23px;background:#d9d9d9"></div>
<svg style="left:604px;top:537px;" width="9" height="9" viewBox="0 0 9 9"><path d="M3.500 0.500h5v5h-5z" fill="#fff" stroke="#444" stroke-width="1"/><path d="M2.500 3.500h-2v5h5v-2" fill="none" stroke="#444" stroke-width="1"/></svg>
<span class="t" style="left:80.07px;top:567.75px;line-height:16px;letter-spacing:-0.296px;">Дата изменения:</span>
<div class="a inp ro" style="left:266px;top:563px;width:161px;height:25px;"></div>
<span class="t" style="left:269.57px;top:567.75px;line-height:16px;letter-spacing:-0.172px;">28.03.2019 12:47:19</span>
<svg style="left:0;top:50px" width="16" height="28" viewBox="0 -14 16 28"><path d="M-2 -6h14M-2 -2h14M-2 2h14M-2 6h14" stroke="#4b4630" stroke-width="1.700"/></svg>
<svg style="left:0;top:85px" width="16" height="28" viewBox="0 -14 16 28"><text x="-2.500" y="-1" font-size="8" font-weight="bold" fill="#4b4630" font-family="Liberation Sans,sans-serif">Дт</text><text x="3.500" y="6.800" font-size="8" font-weight="bold" fill="#4b4630" font-family="Liberation Sans,sans-serif">Кт</text></svg>
<svg style="left:0;top:120px" width="16" height="28" viewBox="0 -14 16 28"><path d="M-3 -4.500h11.500v10.500h-11.500z" fill="#4b4630"/><path d="M-1 -6.300h11.200v10.300M1 -8h11.200v10.300" stroke="#4b4630" stroke-width="1" fill="none"/></svg>
<svg style="left:0;top:155px" width="16" height="28" viewBox="0 -14 16 28"><path d="M-3.500 1l4 -4l3.500 3.500l5.500 -5.500" stroke="#4b4630" stroke-width="1.900" fill="none"/><path d="M8.500 -6.500h5v5z" fill="#4b4630"/></svg>
<svg style="left:0;top:190px" width="16" height="28" viewBox="0 -14 16 28"><circle cx="5" cy="0.500" r="7" fill="#4b4630"/><path d="M3.500 5v-9h2.800a2.400 2.400 0 0 1 0 4.800h-4.300M2 3h4.500" stroke="#fbed9e" stroke-width="1.300" fill="none"/></svg>
<svg style="left:0;top:225px" width="16" height="28" viewBox="0 -14 16 28"><path d="M-3 -2.500h13.500v8.500h-13.500z" fill="#4b4630"/><path d="M4.500 -1v-4.500a2.200 2.200 0 0 1 4.400 0v4.500" stroke="#4b4630" stroke-width="1.400" fill="none"/></svg>
<svg style="left:0;top:260px" width="16" height="28" viewBox="0 -14 16 28"><path d="M-6 -5.500h19l-2.500 7h-14z" fill="#4b4630"/><path d="M-4 3.500h14.500" stroke="#4b4630" stroke-width="1.200"/><circle cx="1.500" cy="5.700" r="1.400" fill="#4b4630"/><circle cx="8.500" cy="5.700" r="1.400" fill="#4b4630"/></svg>
<svg style="left:0;top:295px" width="16" height="28" viewBox="0 -14 16 28"><path d="M-2 -6.500h6.500v4h-6.500zM6 -6.500h5.500v4h-5.500zM-2 -1h6.500v4h-6.500zM6 -1h5.500v4h-5.500z" fill="#4b4630"/><path d="M-2 5.500h14" stroke="#4b4630" stroke-width="1.200"/></svg>
<svg style="left:0;top:330px" width="16" height="28" viewBox="0 -14 16 28"><path d="M-4 7v-9l5 -4.500v4.500l5 -4.500v4.500l6 -5v14z" fill="#4b4630"/><path d="M0 -7.500l2.500 0l-2.500 3.500z" fill="#4b4630"/></svg>
<svg style="left:0;top:365px" width="16" height="28" viewBox="0 -14 16 28"><path d="M-6 -5h11.500v9h-11.500zM6.500 -3h3.500l3 3.500v3.500h-6.500z" fill="#4b4630"/><circle cx="0.500" cy="5" r="2" fill="#4b4630" stroke="#fbed9e" stroke-width="0.800"/><circle cx="9.500" cy="5" r="2" fill="#4b4630" stroke="#fbed9e" stroke-width="0.800"/></svg>
<svg style="left:0;top:400px" width="16" height="28" viewBox="0 -14 16 28"><circle cx="3.500" cy="-3.300" r="3.600" fill="#4b4630"/><path d="M-4 6c0 -3 3 -5 7.500 -5s7.500 2 7.500 5z" fill="#4b4630"/></svg>
<svg style="left:0;top:435px" width="16" height="28" viewBox="0 -14 16 28"><path d="M-1 -1.500h3v6.500h-3zM3.500 -5.500h2.700v10.500h-2.700zM8 -4h2.500v9h-2.500z" fill="#4b4630"/><path d="M-3 5.500h15" stroke="#4b4630" stroke-width="1.400"/></svg>
<svg style="left:0;top:470px" width="16" height="28" viewBox="0 -14 16 28"><path d="M-4 -5.500h16v7h-16z" fill="#4b4630"/><ellipse cx="4" cy="-2" rx="2.300" ry="1.800" fill="#fbed9e"/><path d="M-4 3.500h16M-4 6h16" stroke="#4b4630" stroke-width="1.100"/></svg>
<svg style="left:0;top:513px" width="16" height="28" viewBox="0 -14 16 28"><rect x="-6" y="-6" width="17.500" height="13" rx="2" fill="none" stroke="#4b4630" stroke-width="1.400"/><path d="M2 -6v-2h5v2" stroke="#4b4630" stroke-width="1.400" fill="none"/><path d="M1 4v-3M4.500 4v-5M8 4v-7" stroke="#4b4630" stroke-width="1.800"/></svg>
<svg style="left:0;top:556px" width="16" height="28" viewBox="0 -14 16 28"><circle cx="9" cy="-3.500" r="3.600" fill="#4b4630"/><path d="M8.200 -1.500v-4h1.500a1.100 1.100 0 0 1 0 2.200h-2" stroke="#fbed9e" stroke-width="0.800" fill="none"/><path d="M-3 5.500h13" stroke="#4b4630" stroke-width="1.200"/><path d="M9.500 3l3 2.500l-3 2.500z" fill="#4b4630"/><path d="M-2 3c1 -3 3 -5 6 -6" stroke="#4b4630" stroke-width="1.100" fill="none" stroke-dasharray="2 1.300"/><path d="M1 -6l4 2.500l-3.500 1.500z" fill="#4b4630"/></svg>
<svg style="left:0;top:591px" width="16" height="28" viewBox="0 -14 16 28"><path d="M-5 -7.500h13.500l4 4v12h-17.500z" fill="none" stroke="#4b4630" stroke-width="1.300"/><path d="M8.500 -7.500v4h4" fill="none" stroke="#4b4630" stroke-width="1"/><circle cx="2" cy="1.500" r="5" fill="#4b4630"/><path d="M0 -1.500c2 1 2 2.500 0 3.500c-1 1 0 2 1 2.500M4.500 -2c-1 1.500 -0.500 2.500 1.500 3" stroke="#fbed9e" stroke-width="0.900" fill="none"/></svg>
<svg style="left:0;top:634px" width="16" height="28" viewBox="0 -14 16 28"><g fill="none" stroke="#4b4630" stroke-width="1.100"><ellipse cx="4" cy="0" rx="7.500" ry="2.800"/><ellipse cx="4" cy="0" rx="7.500" ry="2.800" transform="rotate(60 4 0)"/><ellipse cx="4" cy="0" rx="7.500" ry="2.800" transform="rotate(120 4 0)"/></g><circle cx="4" cy="0" r="1.500" fill="#4b4630"/></svg>
<svg style="left:676.8px;top:93.5px;" width="14" height="15" viewBox="0 0 14 15"><path d="M10.800 3.400a5.300 5.300 0 1 0 1.500 5.100" stroke="#35a044" stroke-width="1.900" fill="none"/><path d="M7.800 0.400l5.600 0.500l-1.300 5.400z" fill="#35a044"/></svg>
<svg style="left:713px;top:93px;" width="20" height="16" viewBox="0 0 20 16"><circle cx="12.700" cy="6.100" r="4.400" fill="#b9c6ab"/><circle cx="7.100" cy="9.700" r="4.400" fill="#b7b8d6" fill-opacity="0.920"/></svg>
<svg style="left:755px;top:93px;" width="14" height="16" viewBox="0 0 14 16"><g opacity="0.800"><path d="M3.500 1h8v8h-8z" fill="#d9d3b4" stroke="#bdb596" stroke-width="0.600"/><path d="M2 3h7v7h-7z" fill="#e2dcc0" stroke="#bdb596" stroke-width="0.600"/><path d="M4.500 3.500h5M4.500 5.500h5M4.500 7.500h5" stroke="#9a9478" stroke-width="0.700"/><path d="M1 9h12v5.500h-12z" fill="#a9b6c8" stroke="#8e9db3" stroke-width="0.700"/><path d="M5 11.500h4" stroke="#6d7c93" stroke-width="1"/></g></svg>
<svg style="left:805.5px;top:92.5px;" width="13" height="17" viewBox="0 0 13 17"><path d="M3 7.500v-3a3.500 3.500 0 0 1 7 0v3" stroke="#8c8c8c" stroke-width="1.600" fill="none"/><rect x="0.600" y="6.900" width="11.800" height="9.200" rx="1" fill="#f3d04d" stroke="#b9962f" stroke-width="1"/><rect x="5.700" y="10" width="1.600" height="2.400" fill="#b9962f"/></svg>
<svg style="left:851px;top:92px;" width="22" height="18" viewBox="0 0 22 18"><path d="M5.300 16v-13" stroke="#e0905a" stroke-width="1.100"/><path d="M5.300 1.300l-2.300 3.800h4.600z" fill="#e0905a"/><path d="M11.500 3.300h6.800M11.500 5.500h6.800M11.500 7.700h6.800" stroke="#222" stroke-width="1"/><path d="M9.300 3.300h1M9.300 5.500h1M9.300 7.700h1" stroke="#222" stroke-width="1"/></svg>
<svg style="left:880px;top:92px;" width="22" height="18" viewBox="0 0 22 18"><path d="M5.300 1.500v13" stroke="#e0905a" stroke-width="1.100"/><path d="M5.300 16.500l-2.300 -3.800h4.600z" fill="#e0905a"/><path d="M10.500 3.300h7.800M10.500 9.700h7.800" stroke="#222" stroke-width="1.100"/><path d="M12 5.400h6.300M12 7.500h6.300M12 11.800h6.300M12 13.900h6.300" stroke="#8a8a8a" stroke-width="0.900"/><path d="M8.800 3.300h0.900M8.800 9.700h0.900M10.400 5.400h0.800M10.400 7.500h0.800M10.400 11.800h0.800M10.400 13.900h0.800" stroke="#222" stroke-width="1"/></svg>
<svg style="left:935.5px;top:93px;" width="13" height="15" viewBox="0 0 13 15"><rect x="0.800" y="2.300" width="11.400" height="11.800" rx="1" fill="#fff" stroke="#9a5a30" stroke-width="1.300"/><path d="M3.800 2.600c0 -1.800 1.300 -2.100 2.700 -2.100s2.700 0.300 2.700 2.100z" fill="#b9b9b9" stroke="#8f8f8f" stroke-width="0.600"/><path d="M3.300 6h6.400M3.300 8.200h6.400M3.300 10.400h6.400" stroke="#b8c4d6" stroke-width="1"/></svg>
<svg style="left:1283.3px;top:491.5px;" width="14" height="15" viewBox="0 0 14 15"><path d="M10.800 3.400a5.300 5.300 0 1 0 1.500 5.100" stroke="#35a044" stroke-width="1.900" fill="none"/><path d="M7.800 0.400l5.600 0.500l-1.300 5.400z" fill="#35a044"/></svg>
<svg style="left:595px;top:375px;" width="18" height="13" viewBox="0 0 18 13"><g stroke="#1d3d63" fill="none" stroke-width="1.300"><path d="M3.300 0.500c-2.300 3.800 -2.300 8.200 0 12"/><path d="M14.700 0.500c2.300 3.800 2.300 8.200 0 12"/><path d="M5 6.500h8" stroke-width="1.500"/></g><path d="M3 6.500l3.500 -2.600v5.200zM15 6.500l-3.500 -2.600v5.200z" fill="#1d3d63"/></svg>
<svg style="left:600px;top:406px;" width="18" height="18" viewBox="0 0 18 18"><path d="M10.500 8v-3.500a3 3 0 0 1 6 0v4.500" stroke="#a3a3a3" stroke-width="1.600" fill="none"/><rect x="1" y="7" width="11.500" height="9.500" rx="1.200" fill="#f3d04d" stroke="#c9a63a" stroke-width="1"/><rect x="6" y="10.300" width="1.500" height="2.200" fill="#b9962f"/></svg>
<svg style="left:659px;top:208px;" width="16" height="16" viewBox="0 0 16 16"><rect x="0.500" y="1.500" width="11" height="11" fill="#fbf7e2" stroke="#b9a86a" stroke-width="0.800"/><path d="M0.500 5h11M0.500 8.500h11M4 1.500v11M8 1.500v11" stroke="#c9bb85" stroke-width="0.700"/><rect x="5.500" y="3" width="9.500" height="4.200" fill="#4d8fd0" stroke="#2f6fb0" stroke-width="0.600"/><path d="M9.500 7.200v3" stroke="#555" stroke-width="1"/><rect x="8.300" y="10" width="2.500" height="5" fill="#d98a3a"/></svg>
<svg style="left:721px;top:672px;" width="15" height="16" viewBox="0 0 15 16"><path d="M1.700 0.800v14.500" stroke="#555" stroke-width="1.300"/><path d="M1.700 2l10.500 4.300l-10.500 3.700" stroke="#555" stroke-width="1.100" fill="none"/></svg>
<svg style="left:932px;top:675px;" width="14" height="11" viewBox="0 0 14 11"><path d="M1 2v7M3.500 2v7" stroke="#2f6f9f" stroke-width="1.300"/><path d="M6 1l6 4.500l-6 4.500z" fill="#2f6f9f"/></svg>
<svg style="left:1086px;top:672px;" width="17" height="17" viewBox="0 0 17 17"><rect x="0.700" y="0.700" width="15.600" height="15.600" fill="#fff" stroke="#3c4f6a" stroke-width="1.200"/><path d="M6 4.700h7.500M6 8.500h7.500M6 12.300h7.500" stroke="#3c4f6a" stroke-width="1"/><path d="M3.300 4.700h1.200M3.300 8.500h1.200M3.300 12.300h1.200" stroke="#3c4f6a" stroke-width="1"/></svg>
</body></html>
